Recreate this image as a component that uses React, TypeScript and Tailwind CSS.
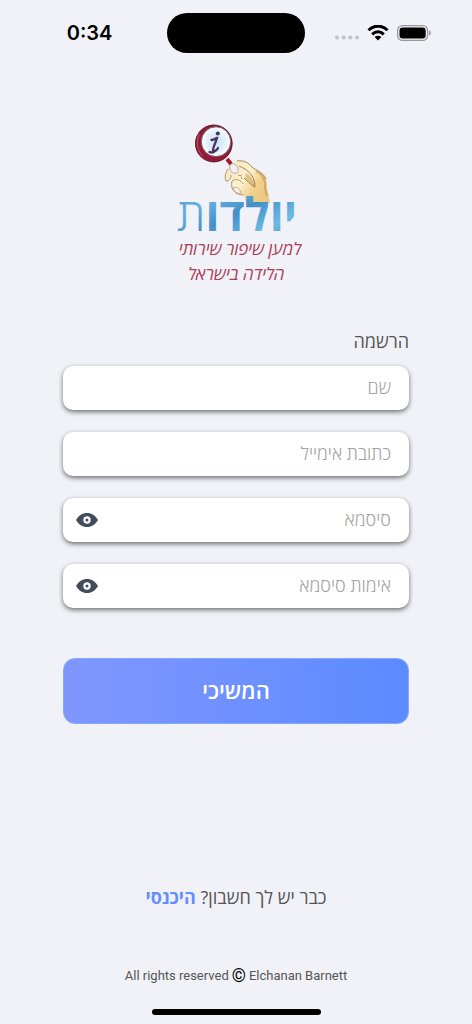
import { useState } from 'react';
import clsx from 'clsx';

interface FieldProps {
  id: string;
  label: string;
  type?: string;
  value: string;
  onChange: (value: string) => void;
}

const EyeIcon = () => (
  <svg viewBox="0 0 22 14" className="w-[22px] h-[14px]" aria-hidden="true">
    <path
      d="M0 7C2.600 2.400 6.400 0 11 0s8.400 2.400 11 7c-2.600 4.600-6.400 7-11 7S2.600 11.600 0 7z"
      fill="#434c5b"
    />
    <circle cx="11" cy="7" r="2.600" fill="#434c5b" stroke="#fff" strokeWidth="2.200" />
  </svg>
);

const Field = ({ id, label, type = 'text', value, onChange }: FieldProps) => {
  const [visible, setVisible] = useState(false);
  const isPassword = type === 'password';

  return (
    <div className="flex items-center h-11 rounded-[10px] bg-white shadow-[0_2px_5px_rgba(0,0,0,0.55)]">
      <input
        id={id}
        type={isPassword && visible ? 'text' : type}
        value={value}
        onChange={(e) => onChange(e.target.value)}
        placeholder={label}
        aria-label={label}
        className="flex-1 min-w-0 h-full pr-[18px] pb-[2px] text-lg font-light text-gray-700 placeholder:text-[#a3a3a3] outline-none"
      />
      {isPassword && (
        <button type="button" aria-label={label} onClick={() => setVisible(!visible)} className="px-[13px] py-2">
          <EyeIcon />
        </button>
      )}
    </div>
  );
};

const StatusBar = () => (
  <div dir="ltr" className="grid grid-cols-[1fr_auto_1fr] items-center pt-[13px]">
    <span className="pl-3 text-center font-['Inter',sans-serif] text-xl font-semibold text-black">0:34</span>
    <div className="w-[138px] h-10 rounded-full bg-black" />
    <div className="flex items-center justify-end gap-2 pr-[41px]">
      <svg viewBox="0 0 24 5" className="w-6 h-[5px] mt-2" fill="#c4c5c9" aria-hidden="true">
        <circle cx="2" cy="2.500" r="2.100" />
        <circle cx="8.700" cy="2.500" r="2.100" />
        <circle cx="15.300" cy="2.500" r="2.100" />
        <circle cx="22" cy="2.500" r="2.100" />
      </svg>
      <svg viewBox="0 0 22 16" className="w-[22px] h-4" fill="none" stroke="#000" strokeWidth="3" aria-hidden="true">
        <path d="M1.500 5.200C6.900-.2 15.100-.2 20.500 5.200" />
        <path d="M5.200 9.300c3.400-3.300 8.200-3.300 11.600 0" />
        <path d="M7.600 12c1.900-1.700 4.900-1.700 6.800 0L11 15.500z" fill="#000" stroke="none" />
      </svg>
      <svg viewBox="0 0 34 16" className="w-[34px] h-4" aria-hidden="true">
        <rect x="0.600" y="0.600" width="30" height="14.800" rx="4.800" fill="none" stroke="#98999c" strokeWidth="1.200" />
        <rect x="2.500" y="2.500" width="26.200" height="11" rx="3.200" fill="#000" />
        <path d="M32 5.300c2.400.8 2.400 4.600 0 5.400z" fill="#98999c" />
      </svg>
    </div>
  </div>
);

const Logo = () => (
  <svg viewBox="0 0 132 168" className="w-[132px] h-[168px]" role="img" direction="rtl">
    <defs>
      <linearGradient id="skin" x1="0" y1="0" x2="1" y2="0.7">
        <stop offset="0" stopColor="#f6e6bb" />
        <stop offset="0.5" stopColor="#fbf0cf" />
        <stop offset="0.75" stopColor="#f0d08a" />
        <stop offset="1" stopColor="#e9c984" />
      </linearGradient>
      <radialGradient id="glass">
        <stop offset="0" stopColor="#c5e3f5" />
        <stop offset="0.65" stopColor="#e2f1fa" />
        <stop offset="1" stopColor="#fff" />
      </radialGradient>
      <linearGradient id="water" x1="0" y1="0" x2="1" y2="1">
        <stop offset="0" stopColor="#4b9ad0" />
        <stop offset="0.3" stopColor="#65b0de" />
        <stop offset="0.5" stopColor="#458fc8" />
        <stop offset="0.75" stopColor="#6ebae4" />
        <stop offset="1" stopColor="#3f87c3" />
      </linearGradient>
    </defs>

    {/* hand */}
    <path
      d="M64 42c4-2 8-1 12 0 3 1 5 3 7 6 5 2 10 5 12 9 2 3 2 7 2 11l3 15H76l-2-8c-5 0-9-2-11-5-1-3-1-5 0-8l-2-4c-1 2-3 5-5 3-2-3 0-10 3-14z"
      fill="url(#skin)"
    />
    <path d="M67 41c6-1 11 1 16 7 6 3 11 6 13 11" fill="none" stroke="#98815c" strokeWidth="0.9" />
    <path d="M86 51c6 3 10 9 9 17l2 8" fill="none" stroke="#cf9b4e" strokeWidth="2" opacity="0.7" />
    <path d="M76 53c5 3 8 8 9 14-4-3-8-6-10-9z" fill="#d9ad69" opacity="0.7" />
    <path d="M69 46c5 2 10 5 13 10 2 3 3 7 3 11-5-3-8-6-11-9" fill="none" stroke="#967649" strokeWidth="0.9" />
    <path d="M58 49c-2 3-4 8-2 12 3 1 5-3 5-6M62 61c-1 5 0 8 2 10 2 3 6 4 10 4" fill="none" stroke="#a58b5c" strokeWidth="0.9" />
    <path d="M62 61c4-3 9-1 11 3M68 55l4 1M71 57l1 2" fill="none" stroke="#b69562" strokeWidth="0.9" />
    <path d="M60 45c3-3 7 0 8 3 1 4-1 6-4 5-3 0-5-4-4-8z" fill="#f4edf2" stroke="#a0938f" strokeWidth="0.7" />
    <path d="M63 68c3-2 7 0 8 5-4 1-7-1-8-5z" fill="#f8eee8" stroke="#a48460" strokeWidth="0.6" />

    {/* magnifying glass */}
    <path d="M57 39l4 5" stroke="#a51835" strokeWidth="4" />
    <ellipse cx="43.800" cy="23.500" rx="18.600" ry="18.700" fill="#941b36" />
    <ellipse cx="43.800" cy="23.500" rx="18.300" ry="18.400" fill="none" stroke="#572033" strokeWidth="0.800" />
    <path d="M29 14c-3 7-2 17 4 22" fill="none" stroke="#b04c5f" strokeWidth="1.200" />
    <ellipse cx="46" cy="21.700" rx="14.700" ry="14.900" fill="url(#glass)" stroke="#72606d" strokeWidth="1" />
    <circle cx="47.800" cy="13.600" r="2" fill="#48335f" />
    <path d="M41.500 20c3 0 4-2 5.500-2-1 4-4 9-4 12.500 2 1.500 4-.5 5-2.500M39.500 32c2 1 3 .5 4.500 0" fill="none" stroke="#48335f" strokeWidth="2.300" strokeLinecap="round" />

    <text x="127" y="111" fontSize="46" fontFamily="'Open Sans', sans-serif" fill="url(#water)">
      <tspan fontWeight="700">יולדו</tspan>
      <tspan fontWeight="300">ת</tspan>
    </text>
    <g fontFamily="'Open Sans', sans-serif" fontStyle="italic" fontWeight="400" fill="#ab4059" textAnchor="middle">
      <text x="70" y="135" fontSize="17">למען שיפור שירותי</text>
      <text x="66" y="160" fontSize="17">הלידה בישראל</text>
    </g>
  </svg>
);

export default function App() {
  const [form, setForm] = useState({ name: '', email: '', password: '', confirm: '' });

  const handleChange = (field: string, value: string) => {
    setForm(prev => ({ ...prev, [field]: value }));
  };

  return (
    <div
      dir="rtl"
      className={clsx('flex flex-col min-h-screen bg-[#f1f2f7] text-[#555]', "font-['Open_Sans',sans-serif]")}
    >
      <StatusBar />

      <main className="flex flex-col flex-1 px-[63px] pt-[67px]">
        <div className="flex justify-center">
          <Logo />
        </div>

        <form onSubmit={(e) => e.preventDefault()} className="flex flex-col pt-[39px]">
          <h1 className="text-lg leading-7">הרשמה</h1>
          <div className="flex flex-col gap-[22px] pt-[11px]">
            <Field id="name" label="שם" value={form.name} onChange={(v) => handleChange('name', v)} />
            <Field id="email" type="email" label="כתובת אימייל" value={form.email} onChange={(v) => handleChange('email', v)} />
            <Field id="password" type="password" label="סיסמא" value={form.password} onChange={(v) => handleChange('password', v)} />
            <Field id="confirm" type="password" label="אימות סיסמא" value={form.confirm} onChange={(v) => handleChange('confirm', v)} />
          </div>
          <button
            type="submit"
            className="h-[66px] mt-[50px] rounded-xl border border-[#83a9fb] bg-linear-to-r from-[#8096ff] to-[#5b8bff] pb-[2px] text-[22px] font-semibold text-white"
          >
            המשיכי
          </button>
        </form>

        <p className="mt-auto text-center text-lg leading-7">
          כבר יש לך חשבון? <a href="#login" className="font-bold text-[#648cff]">היכנסי</a>
        </p>
      </main>

      <footer className="flex flex-col items-center pt-[55px] pb-[9px]">
        <p dir="ltr" className="flex items-center gap-[3px] font-['Roboto',sans-serif] text-[13px] leading-5">
          All rights reserved
          <span className="text-lg leading-5 text-black">©</span>
          Elchanan Barnett
        </p>
        <div className="w-[169px] h-[6px] mt-[23px] rounded-full bg-black" />
      </footer>
    </div>
  );
}
